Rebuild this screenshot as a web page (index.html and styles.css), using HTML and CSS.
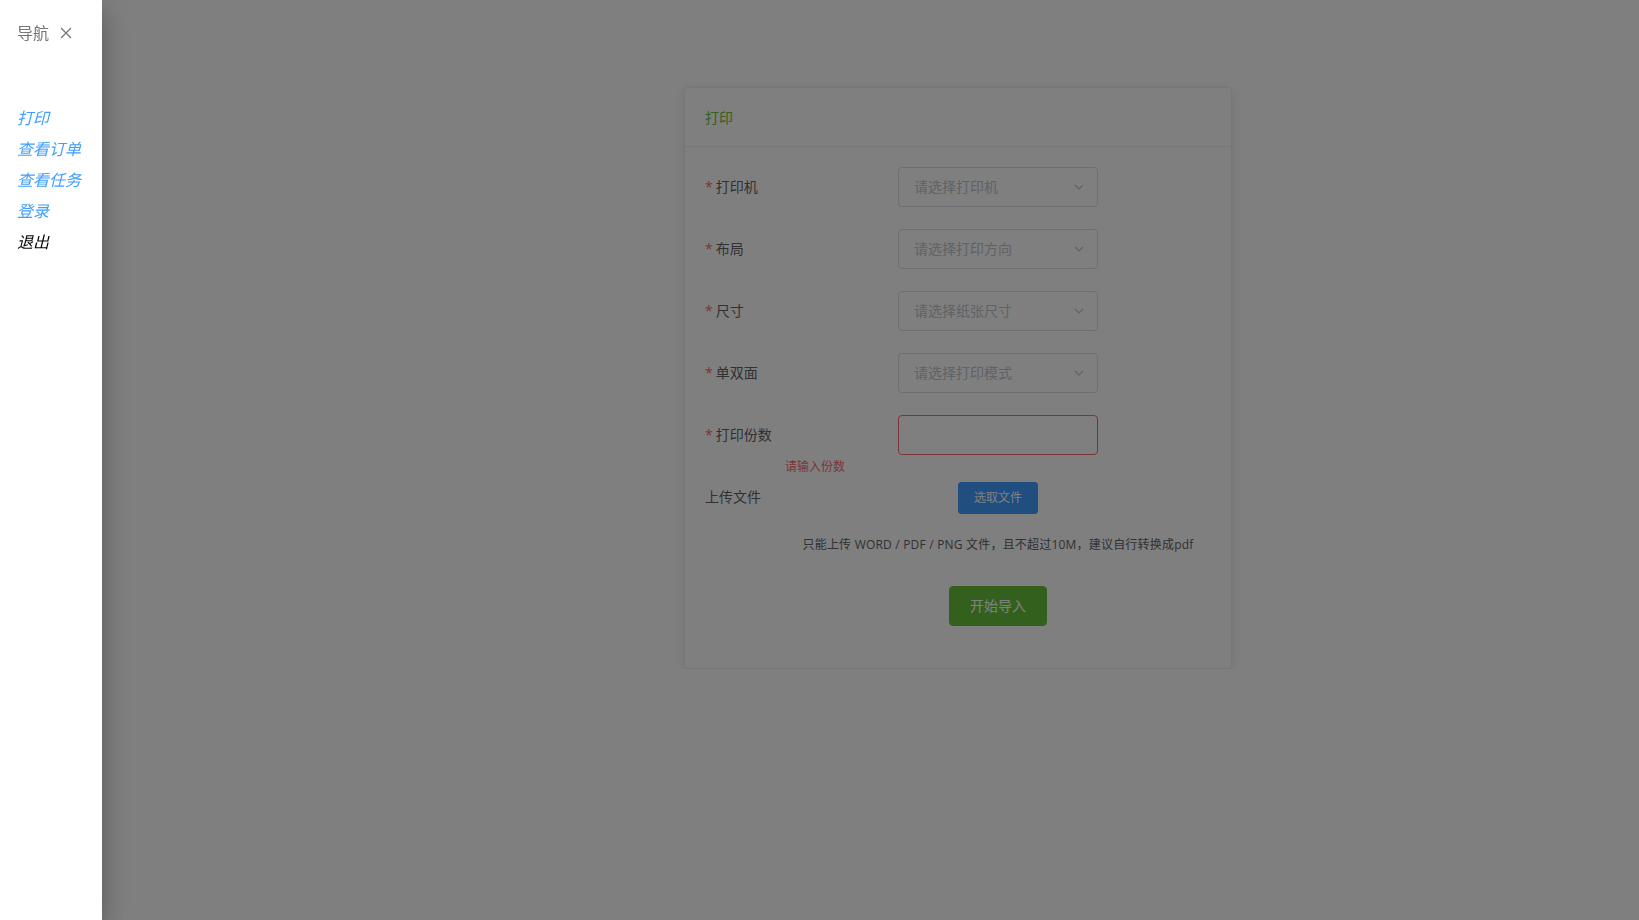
FILE: index.html
```html
<!DOCTYPE html>
<html lang="zh-CN">

<head>
    <meta charset="UTF-8">
    <title>打印</title>
    <link rel="stylesheet" href="styles.css">
</head>

<body>

    <div class="page">
        <div class="row">
            <div class="col">
                <div class="card">
                    <div class="card-header">打印</div>
                    <div class="card-body">
                        <form class="form">
                            <div class="form-item">
                                <label class="form-label required">打印机</label>
                                <div class="form-content">
                                    <div class="select">
                                        <span class="placeholder">请选择打印机</span>
                                        <svg class="arrow" viewBox="0 0 12 12"><path d="M2 4l4 4 4-4"/></svg>
                                    </div>
                                </div>
                            </div>
                            <div class="form-item">
                                <label class="form-label required">布局</label>
                                <div class="form-content">
                                    <div class="select">
                                        <span class="placeholder">请选择打印方向</span>
                                        <svg class="arrow" viewBox="0 0 12 12"><path d="M2 4l4 4 4-4"/></svg>
                                    </div>
                                </div>
                            </div>
                            <div class="form-item">
                                <label class="form-label required">尺寸</label>
                                <div class="form-content">
                                    <div class="select">
                                        <span class="placeholder">请选择纸张尺寸</span>
                                        <svg class="arrow" viewBox="0 0 12 12"><path d="M2 4l4 4 4-4"/></svg>
                                    </div>
                                </div>
                            </div>
                            <div class="form-item">
                                <label class="form-label required">单双面</label>
                                <div class="form-content">
                                    <div class="select">
                                        <span class="placeholder">请选择打印模式</span>
                                        <svg class="arrow" viewBox="0 0 12 12"><path d="M2 4l4 4 4-4"/></svg>
                                    </div>
                                </div>
                            </div>
                            <div class="form-item">
                                <label class="form-label required">打印份数</label>
                                <div class="form-content">
                                    <div class="input is-error"></div>
                                    <div class="form-error">请输入份数</div>
                                </div>
                            </div>
                            <div class="form-item">
                                <label class="form-label">上传文件</label>
                                <div class="form-content">
                                    <div class="upload">
                                        <button type="button" class="btn btn-small btn-primary">选取文件</button>
                                        <div class="upload-tip">只能上传 WORD / PDF / PNG 文件，且不超过10M，建议自行转换成pdf</div>
                                    </div>
                                </div>
                            </div>
                            <div class="form-item">
                                <div class="form-content no-label">
                                    <button type="button" class="btn btn-success">开始导入</button>
                                </div>
                            </div>
                        </form>
                    </div>
                </div>
            </div>
        </div>
    </div>

    <div class="modal"></div>

    <div class="drawer">
        <div class="drawer-header">
            <span class="drawer-title">导航</span>
            <svg class="close" viewBox="0 0 12 12"><path d="M1 1l10 10M11 1L1 11"/></svg>
        </div>
        <div class="nav">
            <a class="nav-link">打印</a>
            <a class="nav-link">查看订单</a>
            <a class="nav-link">查看任务</a>
            <a class="nav-link">登录</a>
            <a class="nav-link logout">退出</a>
        </div>
    </div>

</body>

</html>
```

FILE: styles.css
```css
body {
    margin: 0;
    font-family: "Open Sans", "Noto Sans CJK SC", sans-serif;
    font-size: 14px;
    color: #606266;
    background: #fff;
}

.page {
    padding-top: 87px;
}

.row {
    display: grid;
    grid-template-columns: 684px 548px;
}

.col {
    grid-column: 2;
}

.card {
    border: 1px solid #ebeef5;
    border-radius: 4px;
    background: #fff;
    box-shadow: 0 2px 12px 0 rgba(0, 0, 0, 0.1);
}

.card-header {
    padding: 19px 20px 18px;
    line-height: 21px;
    color: #67c23a;
    border-bottom: 1px solid #ebeef5;
}

.card-body {
    padding: 20px;
}

.form-item {
    display: flex;
    margin-bottom: 22px;
}

.form-label {
    width: 80px;
    flex: none;
    line-height: 40px;
    padding-right: 12px;
    box-sizing: border-box;
    font-size: 14px;
    color: #606266;
}

.form-label.required::before {
    content: "*";
    color: #f56c6c;
    margin-right: 3px;
}

.form-content {
    flex: 1;
    position: relative;
    text-align: center;
    line-height: 40px;
}

.form-content.no-label {
    margin-left: 80px;
}

.select,
.input {
    display: inline-flex;
    align-items: center;
    width: 200px;
    height: 40px;
    box-sizing: border-box;
    border: 1px solid #dcdfe6;
    border-radius: 4px;
    background: #fff;
    padding: 0 12px 0 15px;
    vertical-align: top;
    text-align: left;
}

.input.is-error {
    border-color: #f56c6c;
}

.placeholder {
    flex: 1;
    color: #c0c4cc;
    font-size: 14px;
}

.arrow {
    width: 12px;
    height: 12px;
    fill: none;
    stroke: #c0c4cc;
    stroke-width: 1.2;
}

.form-error {
    position: absolute;
    left: 0;
    top: 100%;
    padding-top: 6px;
    font-size: 12px;
    line-height: 1;
    color: #f56c6c;
}

.upload {
    padding-top: 5px;
    line-height: 1;
}

.upload-tip {
    margin: 22px 0 10px;
    font-size: 12px;
    line-height: 1.5;
    letter-spacing: 0.2px;
    color: #606266;
}

.btn {
    display: inline-block;
    border: 1px solid transparent;
    border-radius: 4px;
    font-family: inherit;
    line-height: 1;
    color: #fff;
    cursor: pointer;
    vertical-align: top;
}

.btn-small {
    padding: 9px 15px;
    font-size: 12px;
    border-radius: 3px;
}

.btn-primary {
    background: #409eff;
    border-color: #409eff;
}

.btn-success {
    padding: 12px 20px;
    font-size: 14px;
    background: #67c23a;
    border-color: #67c23a;
}

.modal {
    position: fixed;
    inset: 0;
    background: #000;
    opacity: 0.5;
}

.drawer {
    position: fixed;
    top: 0;
    left: 0;
    bottom: 0;
    width: 102px;
    background: #fff;
    box-shadow: 0 8px 10px -5px rgba(0, 0, 0, 0.2), 0 16px 24px 2px rgba(0, 0, 0, 0.14), 0 6px 30px 5px rgba(0, 0, 0, 0.12);
}

.drawer-header {
    display: flex;
    align-items: center;
    padding: 21px 18px 0 17px;
    margin-bottom: 32px;
    color: #72767b;
}

.drawer-title {
    font-size: 16px;
    line-height: 24px;
}

.close {
    width: 12px;
    height: 12px;
    margin-left: 11px;
    fill: none;
    stroke: #72767b;
    stroke-width: 1.3;
}

.nav {
    display: flex;
    flex-direction: column;
    align-items: flex-start;
    padding: 26px 0 0 17px;
}

.nav-link {
    font-size: 16px;
    line-height: 31px;
    font-style: italic;
    color: #409eff;
    cursor: pointer;
}

.nav-link.logout {
    color: #000;
}
```
